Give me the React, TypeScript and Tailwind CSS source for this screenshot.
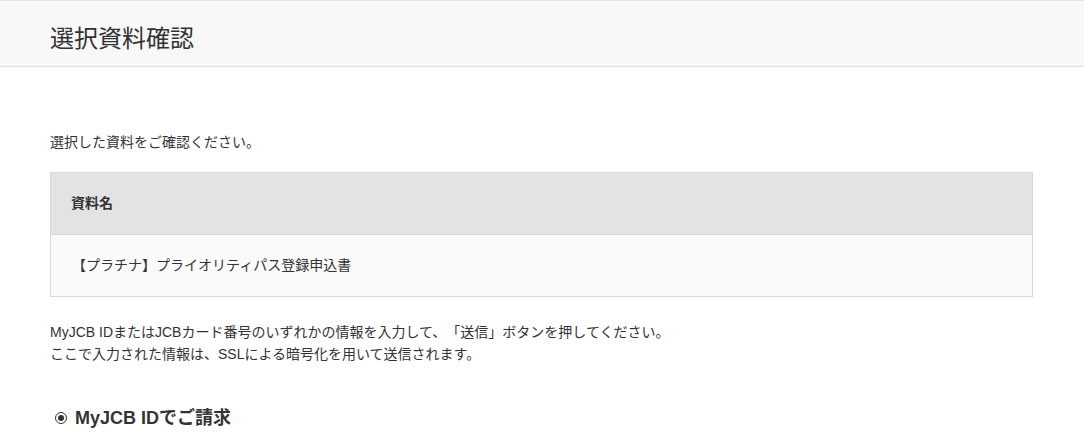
import React from "react";

const font = {
  fontFamily: '"Liberation Sans", Arial, "Noto Sans CJK JP", sans-serif',
};

export default function App() {
  return (
    <div className="min-h-[443px] bg-white text-[#333333] [text-spacing-trim:space-all]" style={font}>
      <div className="border-t border-t-[#e6e6e6] border-b border-b-[#e0e0e0] bg-[#f8f8f8] h-[67px] flex items-center pl-[50px]">
        <h1 className="text-[24px] leading-[30px] font-normal text-[#333333] mt-[10px]">選択資料確認</h1>
      </div>
      <div className="pl-[50px] pr-[51px]">
        <p className="text-[14px] leading-[20px] mt-[65px]">選択した資料をご確認ください。</p>
        <div className="mt-[20px] border border-[#d9d9d9]">
          <div className="bg-[#e3e3e3] h-[62px] flex items-center pl-[20px] border-b border-[#d9d9d9]">
            <span className="text-[14px] font-bold">資料名</span>
          </div>
          <div className="bg-[#fafafa] h-[61px] flex items-center pl-[21px]">
            <span className="text-[14px]">【プラチナ】プライオリティパス登録申込書</span>
          </div>
        </div>
        <div className="mt-[24px] text-[14px] leading-[22px]">
          <p>MyJCB IDまたはJCBカード番号のいずれかの情報を入力して、「送信」ボタンを押してください。</p>
          <p>ここで入力された情報は、SSLによる暗号化を用いて送信されます。</p>
        </div>
        <div className="mt-[41px] flex items-center pl-[5px] gap-[8px]">
          <span className="w-[12px] h-[12px] rounded-full border-[1.5px] border-[#333] flex items-center justify-center">
            <span className="w-[6px] h-[6px] rounded-full bg-[#333]" />
          </span>
          <span className="text-[18px] font-bold leading-[24px]">MyJCB IDでご請求</span>
        </div>
      </div>
    </div>
  );
}
